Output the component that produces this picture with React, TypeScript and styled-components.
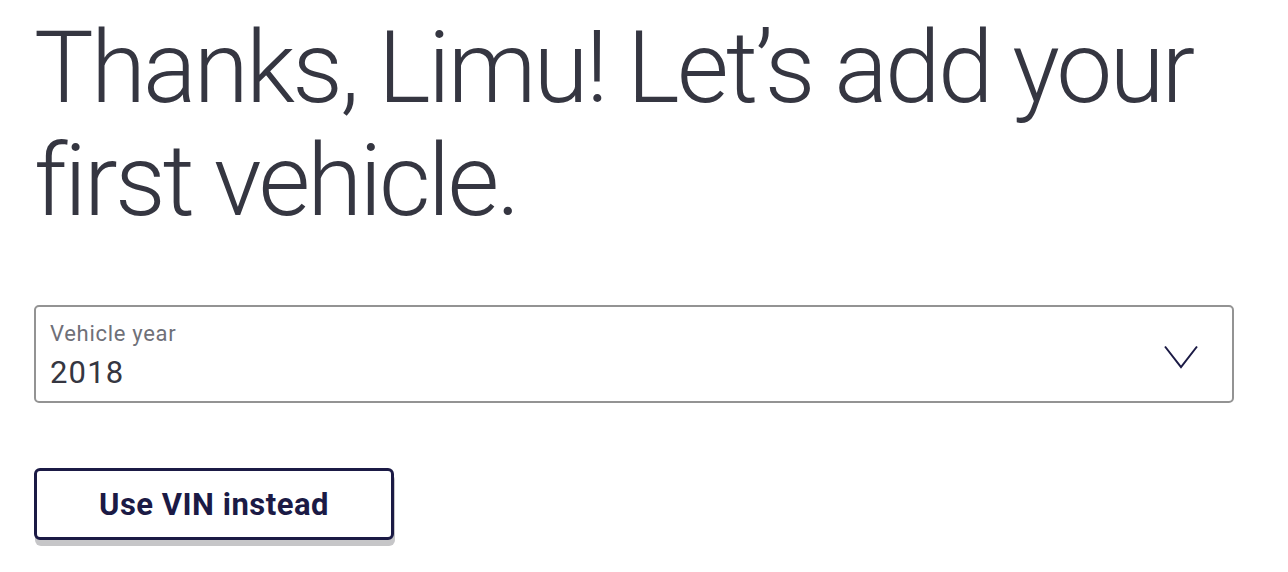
import styled, { createGlobalStyle } from 'styled-components';

const GlobalStyle = createGlobalStyle`
  html, body {
    margin: 0;
    padding: 0;
    background: #ffffff;
  }
  body {
    font-family: Roboto, "Liberation Sans", Arial, sans-serif;
    color: #353641;
  }
`;

const Page = styled.main`
  padding: 11px 54px 24px 34px;
  display: flex;
  flex-direction: column;
`;

const Heading = styled.h1`
  margin: 0;
  font-weight: 300;
  font-size: 100px;
  line-height: 113px;
  letter-spacing: -2.8px;
  color: #353641;
`;

const SelectBox = styled.label`
  margin-top: 68px;
  height: 98px;
  box-sizing: border-box;
  border: 2px solid #939393;
  border-radius: 5px;
  padding: 12px 34px 0 14px;
  display: flex;
  align-items: flex-start;
  justify-content: space-between;
  cursor: pointer;
`;

const FieldText = styled.div`
  display: flex;
  flex-direction: column;
`;

const FieldLabel = styled.span`
  font-size: 22px;
  line-height: 30px;
  letter-spacing: 0.7px;
  color: #6f7078;
`;

const FieldValue = styled.span`
  margin-top: 3px;
  font-size: 31px;
  line-height: 42px;
  letter-spacing: 1.2px;
  color: #353641;
`;

const Chevron = styled.svg`
  margin-top: 26px;
  flex-shrink: 0;
`;

const Actions = styled.div`
  margin-top: 65px;
  display: flex;
`;

const OutlineButton = styled.button`
  width: 360px;
  height: 72px;
  box-sizing: border-box;
  background: #ffffff;
  border: 3px solid #1b1a45;
  border-radius: 6px;
  box-shadow: 1px 6px 0 #c6c6c8;
  font-family: Roboto, "Liberation Sans", Arial, sans-serif;
  font-weight: 700;
  font-size: 31px;
  letter-spacing: 0.5px;
  color: #1b1a45;
  cursor: pointer;
`;

export default function App() {
  return (
    <>
      <GlobalStyle />
      <Page>
        <Heading>Thanks, Limu! Let’s add your first vehicle.</Heading>
        <SelectBox>
          <FieldText>
            <FieldLabel>Vehicle year</FieldLabel>
            <FieldValue>2018</FieldValue>
          </FieldText>
          <Chevron width="34" height="24" viewBox="0 0 34 24" fill="none">
            <path d="M1 1.5 L17 22 L33 1.5" stroke="#1b1a45" strokeWidth="2" />
          </Chevron>
        </SelectBox>
        <Actions>
          <OutlineButton type="button">Use VIN instead</OutlineButton>
        </Actions>
      </Page>
    </>
  );
}
